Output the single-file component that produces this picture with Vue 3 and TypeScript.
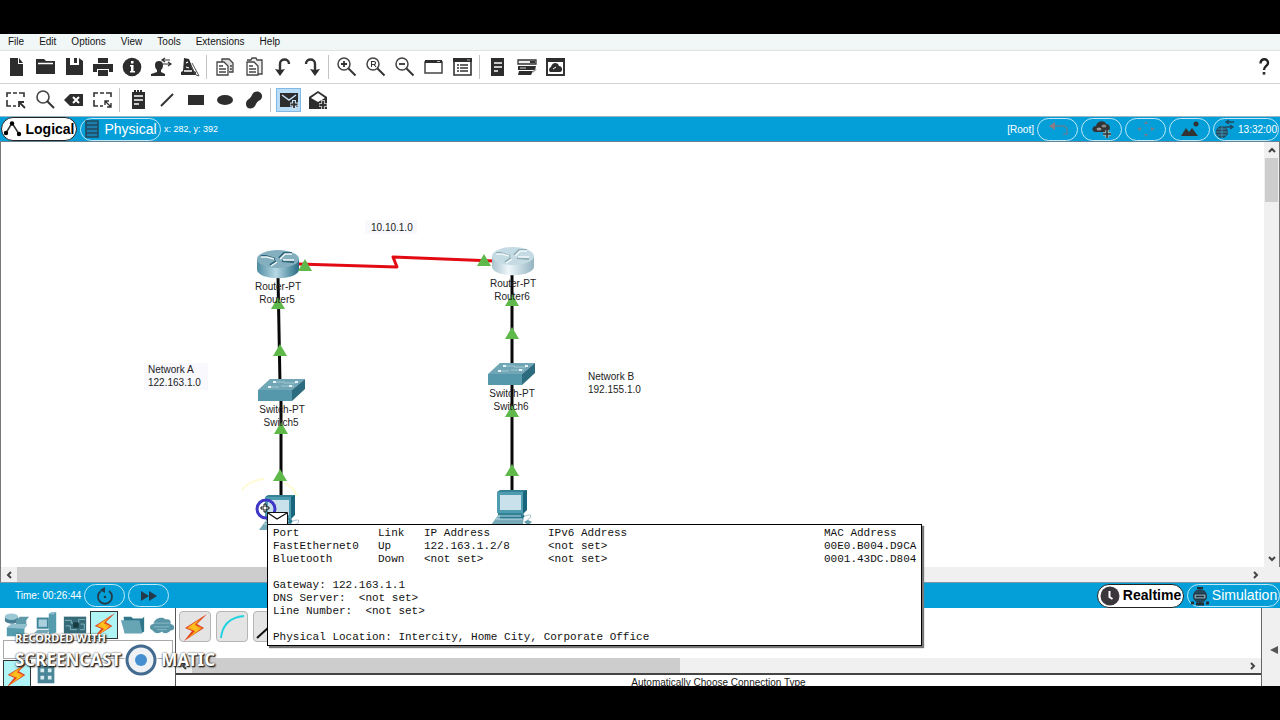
<script setup lang="ts">
interface Tool {
  name: string
  icon: string
  active?: boolean
}

interface Point {
  x: number
  y: number
}

const menus: string[] = ['File', 'Edit', 'Options', 'View', 'Tools', 'Extensions', 'Help']

const lens = '<circle cx="9" cy="9" r="6" fill="none" stroke="#444" stroke-width="1.500"/><path d="M13.500 13.500l7 7" stroke="#333" stroke-width="2"/>'
const dashes = '<path d="M3 9V5h4M9 5h4M15 5h5v4M3 12v6h4M9 18h3" fill="none" stroke="#333" stroke-width="1.600"/>'

const mainTools: Tool[][] = [
  [
    { name: 'New', icon: '<path d="M6 3h8v6h5v12H6zM15 3l4 5h-4z"/>' },
    { name: 'Open', icon: '<path d="M3 4h8l2 2h9v13H3z"/><path d="M5 8.500h15" stroke="#fff" stroke-width="1.500"/>' },
    { name: 'Save', icon: '<path d="M4 3h4v7h9V3l4 3v14H4zM12 3h3v5h-3z"/>' },
    { name: 'Print', icon: '<path d="M7 3h10v5H7zM2 9h20v8h-4v-3H6v3H2zM7 15h10v6H7z"/>' },
    { name: 'Network information', icon: '<circle cx="12" cy="12" r="9.300"/><path d="M11 6h2.500v2.500H11zM10 10h3.500v6H15v1.500h-5V16h1v-4.500h-1z" fill="#fff"/>' },
    { name: 'User profile', icon: '<path d="M6 10a4 4 0 018 0c0 3-1 4-2 5v2l4 2v2H2v-2l6-2v-2c-1-1-2-2-2-5z"/><path d="M14 5h7M14 9h7M16 3l-3 2 3 2M19 7l3 2-3 2" fill="none" stroke="#333" stroke-width="1.200"/>' },
    { name: 'Activity wizard', icon: '<path d="M6 3l5 1 5 12 2 1v3H3v-3l2-1z"/><path d="M8 8l2-1M8 12l3 1M6 16h8" stroke="#fff" stroke-width="1.300"/><path d="M14 8l6 11 1 2-3-1-5-9" fill="none" stroke="#555"/>' },
  ],
  [
    { name: 'Copy', icon: '<path d="M9 7V4h7l4 4v9h-4" fill="#ddd" stroke="#444" stroke-width="1.300"/><path d="M4 7h7l4 4v9H4z" fill="#fff" stroke="#444" stroke-width="1.300"/><path d="M6 11h4M6 14h7M6 17h7M17 11h2M17 14h2" stroke="#444" stroke-width="1.300"/>' },
    { name: 'Paste', icon: '<path d="M5 5h4l1-2h4l1 2h5v14h-5" fill="#eee" stroke="#444" stroke-width="1.300"/><path d="M5 7h7l4 4v9H5z" fill="#fff" stroke="#444" stroke-width="1.300"/><path d="M7 11h4M7 14h7M7 17h7" stroke="#444" stroke-width="1.300"/>' },
    { name: 'Undo', icon: '<path d="M18 9c0-6-9-6-9 0v8" fill="none" stroke="#333" stroke-width="2.400"/><path d="M4 14l5 1 5-1-5 7z"/>' },
    { name: 'Redo', icon: '<path d="M6 9c0-6 9-6 9 0v8" fill="none" stroke="#333" stroke-width="2.400"/><path d="M10 14l5 1 5-1-5 7z"/>' },
  ],
  [
    { name: 'Zoom in', icon: lens + '<path d="M6 9h6M9 6v6" stroke="#333" stroke-width="1.800"/>' },
    { name: 'Zoom reset', icon: lens + '<path d="M7.500 12V6.500H10a1.500 1.500 0 010 3H8M10 9.500l2 2.500" fill="none" stroke="#333" stroke-width="1.100"/>' },
    { name: 'Zoom out', icon: lens + '<path d="M6 9h6" stroke="#333" stroke-width="1.800"/>' },
    { name: 'Drawing palette', icon: '<path d="M3 7h17v11H3z" fill="#fff" stroke="#444" stroke-width="1.500"/><path d="M3 5h17v3H3z"/><path d="M15 6.500h3" stroke="#bbb"/>' },
    { name: 'Custom devices dialog', icon: '<path d="M3 5h17v15H3z" fill="#fff" stroke="#333" stroke-width="1.600"/><path d="M2 3h19v4H2z"/><path d="M6 10h2M6 13h2M6 16h2M9 10h8M9 13h8M9 16h8" stroke="#333" stroke-width="1.600"/><path d="M16 5h3" stroke="#aaa"/>' },
  ],
  [
    { name: 'Notes', icon: '<path d="M5 3h13v18H5z"/><path d="M8 8h8M8 12h8M8 16h4" stroke="#fff" stroke-width="1.500"/>' },
    { name: 'Device list', icon: '<path d="M3 5h18v4H3z" fill="#eee" stroke="#333" stroke-width="1.300"/><path d="M3 11h18l-1 4H3zM4 16h14l-2 4H3z"/><path d="M15 7h5" stroke="#333" stroke-width="2"/><path d="M5 13h6M18 17l3-3" stroke="#999" stroke-width="1.500"/>' },
    { name: 'Background', icon: '<path d="M3 5h17v15H3z" fill="#fff" stroke="#333" stroke-width="2"/><path d="M2 3h19v4H2z"/><path d="M6 17a3 3 0 011-5c1-5 7-5 8-1 4 0 4 6 1 6z"/><path d="M9 14l3-2" stroke="#fff"/>' },
  ],
]

const drawTools: Tool[][] = [
  [
    { name: 'Select', icon: dashes + '<path d="M21 20l-5-5M15 19v-5h5" fill="none" stroke="#333" stroke-width="1.800"/>' },
    { name: 'Inspect', icon: '<circle cx="10" cy="9" r="6" fill="none" stroke="#444" stroke-width="1.600"/><path d="M14 13l7 7" stroke="#333" stroke-width="2"/>' },
    { name: 'Delete', icon: '<path d="M2 12l6-6h13v12H8z"/><path d="M11 9l6 6M17 9l-6 6" stroke="#fff" stroke-width="2"/>' },
    { name: 'Resize', icon: dashes + '<path d="M14 13l6 6M14 17v-4h4M20 15v4h-4" fill="none" stroke="#333" stroke-width="1.400"/>' },
  ],
  [
    { name: 'Place note', icon: '<path d="M6 4h2V2h2v2h1V2h2v2h1V2h2v2h3v17H6z"/><path d="M8 8h9M8 12h9M8 16h5" stroke="#fff" stroke-width="1.500"/>' },
    { name: 'Draw line', icon: '<path d="M6 18L18 6" stroke="#333" stroke-width="2"/>' },
    { name: 'Draw rectangle', icon: '<path d="M4 7h16v10H4z"/>' },
    { name: 'Draw ellipse', icon: '<ellipse cx="12" cy="12" rx="8" ry="5"/>' },
    { name: 'Draw freeform', icon: '<path d="M10 7c2-6 11-4 10 2-1 4-4 3-6 7-2 6-10 6-10 0 0-5 4-4 6-9z"/>' },
  ],
  [
    { name: 'Add simple PDU', active: true, icon: '<path d="M3 5h18v14H3z"/><path d="M5 7l7 5 7-5" fill="none" stroke="#c6e0f5" stroke-width="1.500"/><path d="M17 12v9M13 16.500h8" stroke="#c6e0f5" stroke-width="4"/><path d="M17 13v7M13.500 16.500h7" stroke="#333" stroke-width="1.800"/>' },
    { name: 'Add complex PDU', icon: '<path d="M3 9l9-6 9 6v12H3z"/><path d="M5 10l7-5 7 5-7 4z" fill="#fff"/><path d="M17 12v9M13 17h8" stroke="#bbb" stroke-width="4"/><path d="M17 13v8M13.500 17h7" stroke="#333" stroke-width="1.800"/>' },
  ],
]

const bolt = '<path d="M26 1L4 15l7 3-8 10 20-13-7-4z" fill="#e2401f"/><path d="M23 3L6 15l8 3-9 9 16-12-7-3z" fill="url(#flash)"/>'

const categories: Tool[] = [
  { name: 'Network devices', icon: '<path d="M1 5v5c3 4 14 3 14 0V5z" fill="#467f92"/><ellipse cx="8" cy="5" rx="7" ry="3.500" fill="#9cc8d6"/><path d="M13 9l4-4h10l-3 4v7H13z" fill="#5f9aab"/><path d="M3 17l5-4h17l-3 5v8H3z" fill="#559caf"/><path d="M3 17l5-4h17l-3 5z" fill="#93c0cd"/>' },
  { name: 'End devices', icon: '<path d="M4 6h13v12H4z" fill="#3f8498"/><path d="M6 8h9v8H6z" fill="#a9d0dc"/><path d="M1 23l4-4h14l-4 4z" fill="#72a7b5"/><path d="M17 2l8-2v22l-8 2z" fill="#559caf"/><path d="M17 2l3-2h5l-3 3z" fill="#8bbccb"/>' },
  { name: 'Components', icon: '<path d="M2 5h24v18H2z" fill="#366b78"/><path d="M3 9h7v3h8V8h7M4 15h5v4h7M20 13h4v6h-5" fill="none" stroke="#89b9c3"/><path d="M12 11h6v6h-6z" fill="#183a43"/>' },
  { name: 'Connections', icon: bolt, active: true },
  { name: 'Miscellaneous', icon: '<path d="M4 5h8l2 2h10l2-2v16l-3 2H5z" fill="#2f768a"/><path d="M1 9h20l3 14H5z" fill="#67a5b5"/>' },
  { name: 'Multiuser connection', icon: '<path d="M4 20c-5-2-3-7 1-7 0-6 9-9 13-5 5-1 6 3 5 5 6 1 5 7 0 7-3 4-8 3-9 1-4 3-8 2-10-1z" fill="#5795a7"/><path d="M5 12h17M5 16h17M9 19h10" stroke="#8bbac7"/>' },
]

const triangles: Point[] = [
  { x: 305, y: 265 }, { x: 278, y: 303 }, { x: 280, y: 350 }, { x: 281, y: 428 }, { x: 280, y: 475 },
  { x: 484, y: 260 }, { x: 512, y: 300 }, { x: 512, y: 333 }, { x: 512, y: 411 }, { x: 512, y: 470 },
]

const routers = [
  { x: 257, y: 250, body: 'url(#routerDark)', top: '#84afbf', mark: '#2d6478' },
  { x: 492, y: 247, body: 'url(#routerLight)', top: '#c5dbe3', mark: '#92aeb9' },
]

const switches: Point[] = [{ x: 258, y: 379 }, { x: 488, y: 363 }]
const computers: Point[] = [{ x: 265, y: 495 }, { x: 497, y: 490 }]

const labels = [
  { x: 278, y: 290, type: 'Router-PT', name: 'Router5', dx: 277 },
  { x: 513, y: 287, type: 'Router-PT', name: 'Router6', dx: 512 },
  { x: 282, y: 413, type: 'Switch-PT', name: 'Switch5', dx: 281 },
  { x: 512, y: 397, type: 'Switch-PT', name: 'Switch6', dx: 511 },
]

const ports = [
  ['FastEthernet0', 'Up', '122.163.1.2/8', '<not set>', '00E0.B004.D9CA'],
  ['Bluetooth', 'Down', '<not set>', '<not set>', '0001.43DC.D804'],
]

const details: string[] = ['Gateway: 122.163.1.1', 'DNS Server:  <not set>', 'Line Number:  <not set>']
</script>

<template>
  <div class="stage">
    <main class="window">
      <nav class="menubar" aria-label="Main menu">
        <button v-for="m in menus" :key="m" type="button">{{ m }}</button>
      </nav>

      <div class="toolbar">
        <div v-for="(group, i) in mainTools" :key="i" class="group">
          <button v-for="t in group" :key="t.name" type="button" class="tool" :aria-label="t.name">
            <svg width="24" height="24" viewBox="0 0 24 24" v-html="t.icon"></svg>
          </button>
        </div>
        <button type="button" class="tool help" aria-label="Help">
          <svg width="24" height="24" viewBox="0 0 24 24"><path d="M8.500 8.500c0-6 8-5 7.500-.500 0 3-4 3-4 7" fill="none" stroke="#222" stroke-width="2.400" /><path d="M10.700 17h2.600v2.600h-2.600z" /></svg>
        </button>
      </div>

      <div class="toolbar second">
        <div v-for="(group, i) in drawTools" :key="i" class="group">
          <button v-for="t in group" :key="t.name" type="button" class="tool" :class="{ active: t.active }" :aria-label="t.name">
            <svg width="24" height="24" viewBox="0 0 24 24" v-html="t.icon"></svg>
          </button>
        </div>
      </div>

      <div class="bluebar top">
        <button type="button" class="pill chosen logical">
          <svg width="20" height="18" viewBox="0 0 20 18"><path d="M3 13L9 3l7 11" fill="none" stroke="#333" stroke-width="1.500" /><circle cx="3" cy="13" r="2.200" /><circle cx="9" cy="3.500" r="2.200" /><circle cx="16" cy="14" r="2.200" /></svg>
          Logical
        </button>
        <button type="button" class="pill mode physical">
          <svg width="16" height="18" viewBox="0 0 16 18"><path d="M2 1h12v16H2zM2 5h12M2 9h12M2 13h12" fill="#1b7fae" stroke="#22485c" stroke-width="1.500" /></svg>
          Physical
        </button>
        <span class="coords">x: 282, y: 392</span>
        <span class="root">[Root]</span>
        <button type="button" class="pill" aria-label="Back to parent">
          <svg width="24" height="20" viewBox="0 0 24 20"><path d="M6 7h11q4 0 4 4v4h-4" fill="none" stroke="#5b819a" stroke-width="1.500" /><path d="M3 7l6-4v8z" fill="#8c7c84" /></svg>
        </button>
        <button type="button" class="pill" aria-label="New cluster">
          <svg width="24" height="20" viewBox="0 0 24 20"><path d="M5 13c-4-1-3-6 1-6 1-6 9-6 10-2 5 0 5 7 1 8z" fill="#333" /><ellipse cx="9" cy="10" rx="2.500" ry="1.500" fill="#999" /><ellipse cx="14" cy="7" rx="2.500" ry="1.500" fill="#888" /><path d="M17 11v8M13 15h8" stroke="#9bb" stroke-width="3.500" /><path d="M17 11v8M13 15h8" stroke="#333" stroke-width="1.600" /></svg>
        </button>
        <button type="button" class="pill" aria-label="Move object">
          <svg width="24" height="20" viewBox="0 0 24 20" fill="#6f7f90"><path d="M12 2l2 3h-4zM12 18l2-3h-4zM3 10l4-2v4zM21 10l-4-2v4z" /></svg>
        </button>
        <button type="button" class="pill" aria-label="Set tiled background">
          <svg width="24" height="20" viewBox="0 0 24 20"><path d="M3 17l5-8 3 4 3-4 6 8z" fill="#333" /><circle cx="18" cy="5" r="2.500" fill="#333" /></svg>
        </button>
        <button type="button" class="pill clock">
          <svg width="20" height="20" viewBox="0 0 20 20" fill="none" stroke="#24485a"><circle cx="7" cy="13" r="5.500" fill="#24485a" /><path d="M1.500 13h11M7 7v12M3 10h8M3 16h8" stroke="#3e91b5" /><path d="M11 3h8M10 8h8M14 1l-3 2 3 2M15 6l3 2-3 2" stroke-width="1.300" /></svg>
          13:32:00
        </button>
      </div>

      <section class="workspace" aria-label="Logical workspace">
        <svg class="canvas" width="1263" height="425">
          <defs>
            <linearGradient id="routerDark"><stop offset="0" stop-color="#4f8ba0" /><stop offset="0.450" stop-color="#b7d9e5" /><stop offset="1" stop-color="#286c84" /></linearGradient>
            <linearGradient id="routerLight"><stop offset="0" stop-color="#a9c5cf" /><stop offset="0.400" stop-color="#eef7fa" /><stop offset="1" stop-color="#93b4c0" /></linearGradient>
            <linearGradient id="flash" x1="1" y1="0" x2="0" y2="1"><stop offset="0" stop-color="#e2401f" /><stop offset="0.500" stop-color="#ffc61e" /><stop offset="1" stop-color="#f0781c" /></linearGradient>
          </defs>
          <g transform="translate(-1 -142)">
            <path d="M365 220h52v14h-52zM144 363h64v27h-64z" fill="#f9f9fd" />
            <path d="M242 490Q250 480 264 479M284 483Q294 487 297 496" fill="none" stroke="#fffbd2" stroke-width="2" />
            <path d="M298 264L397 267 393 257 494 261" fill="none" stroke="#e30b13" stroke-width="3" stroke-linejoin="round" />
            <path d="M278 276L280 384M281 400V496M512 274V368M512 384V492" stroke="#080808" stroke-width="3" />

            <g v-for="r in routers" :key="r.x" :transform="`translate(${r.x} ${r.y})`">
              <path d="M0 9v11c2 11 40 11 42 0V9z" :fill="r.body" />
              <ellipse cx="21" cy="9" rx="21" ry="9" :fill="r.top" />
              <path d="M4 6h5l9 3M22 8l5-5h8M25 11l12 1M13 15l6-4" fill="none" :stroke="r.mark" stroke-width="2" />
              <path d="M4 7h6l7 2M23 9l5-5h7M26 10h11M14 16l6-4" fill="none" stroke="#f4fafc" stroke-width="1.500" />
            </g>

            <g v-for="s in switches" :key="s.x" :transform="`translate(${s.x} ${s.y})`">
              <path d="M0 11h34v11H0z" fill="#5597ab" />
              <path d="M0 11L12 0h35L34 11z" fill="#71a6b7" />
              <path d="M34 11L47 0v10L34 22z" fill="#2d6b7e" />
              <path d="M15 3h12M26 4h12M11 8h10M23 7h13" stroke="#a5c9d4" />
              <path d="M15 3h3M37 3h3M10 8h3M31 7h3" stroke="#e8f5f8" stroke-width="2" />
            </g>

            <g v-for="c in computers" :key="c.x" :transform="`translate(${c.x} ${c.y})`">
              <path d="M-6 35l8-11h25l-1 11z" fill="#76aab8" />
              <path d="M3 23h20l5 3-3 3H3z" fill="#28798e" />
              <path d="M0 2l3-2h27l-3 23-3 2H1z" fill="#348196" />
              <path d="M0 2h26v21H0z" fill="#4e9cb0" />
              <path d="M26 2l4-2v20l-4 4z" fill="#19657b" />
              <path d="M3 5h21v15H3z" fill="#c9e1eb" />
              <path d="M-1 29h26M0 26h24" stroke="#bbdce6" />
              <path d="M28 26q8-3 5 2l-5 4" fill="none" stroke="#a9c5ce" />
              <path d="M27 32l4-2 4 2-4 3z" fill="#609dad" />
            </g>

            <path v-for="(t, i) in triangles" :key="i" :d="`M${t.x} ${t.y - 6}l7 12h-14z`" fill="#5fb84a" />

            <g v-for="l in labels" :key="l.name" class="name">
              <text :x="l.x" :y="l.y">{{ l.type }}</text>
              <text :x="l.dx" :y="l.y + 13">{{ l.name }}</text>
            </g>
            <text x="371" y="231">10.10.1.0</text>
            <text x="148" y="373">Network A</text>
            <text x="148" y="386">122.163.1.0</text>
            <text x="588" y="380">Network B</text>
            <text x="588" y="393">192.155.1.0</text>
          </g>
        </svg>
        <div class="vscroll">
          <button type="button" aria-label="Scroll up"><svg width="8" height="6" viewBox="0 0 8 6"><path d="M1 5l3-3 3 3" /></svg></button>
          <div class="vthumb"></div>
          <button type="button" class="end" aria-label="Scroll down"><svg width="8" height="6" viewBox="0 0 8 6"><path d="M1 1l3 3 3-3" /></svg></button>
        </div>
      </section>
      <div class="hscroll main-scroll">
        <button type="button" aria-label="Scroll left"><svg width="6" height="8" viewBox="0 0 6 8"><path d="M5 1L2 4l3 3" /></svg></button>
        <div class="hthumb"></div>
        <button type="button" class="end" aria-label="Scroll right"><svg width="6" height="8" viewBox="0 0 6 8"><path d="M1 1l3 3-3 3" /></svg></button>
      </div>

      <div class="bluebar bottom">
        <span class="time">Time: 00:26:44</span>
        <button type="button" class="pill" aria-label="Power cycle devices">
          <svg width="24" height="20" viewBox="0 0 24 20"><path d="M8 5a7 7 0 108 0" fill="none" stroke="#243a48" stroke-width="1.800" /><path d="M12 1v6L7 4z" fill="#243a48" /><circle cx="12" cy="11" r="1.300" fill="#243a48" /></svg>
        </button>
        <button type="button" class="pill" aria-label="Fast forward">
          <svg width="24" height="20" viewBox="0 0 24 20"><path d="M4 5l8 5-8 5zM12 5l8 5-8 5z" fill="#243a48" /></svg>
        </button>
        <button type="button" class="pill chosen realtime">
          <svg width="20" height="20" viewBox="0 0 20 20"><circle cx="10" cy="10" r="9.500" fill="#3a363b" /><path d="M9.500 5v6l3 2" fill="none" stroke="#fff" stroke-width="2" /></svg>
          Realtime
        </button>
        <button type="button" class="pill mode simulation">
          <svg width="20" height="20" viewBox="0 0 20 20"><circle cx="10" cy="10" r="7" fill="#24485a" /><path d="M7 2h6" stroke="#222f38" stroke-width="2" /><path d="M4 8h12v5H4z" fill="#7fa3b5" stroke="#222f38" /><path d="M6 10.500h8" stroke="#222f38" stroke-width="1.500" /><path d="M1 17h3M6 18h8M16 17h3" stroke="#222f38" stroke-width="3" /></svg>
          Simulation
        </button>
      </div>

      <section class="dock">
        <div class="library">
          <div class="cats">
            <button v-for="c in categories" :key="c.name" type="button" class="cat" :class="{ on: c.active }" :aria-label="c.name">
              <svg width="26" height="26" viewBox="0 0 28 28" v-html="c.icon"></svg>
            </button>
          </div>
          <div class="caption"></div>
          <div class="cats">
            <button type="button" class="cat on" aria-label="Connections"><svg width="26" height="26" viewBox="0 0 28 28" v-html="bolt"></svg></button>
            <button type="button" class="cat" aria-label="Structured cabling"><svg width="26" height="26" viewBox="0 0 28 28"><path d="M5 4h18v20H5z" fill="#4a8597" /><path d="M8 8h4v4H8zM16 8h4v4h-4zM8 16h4v4H8zM16 16h4v4h-4z" fill="#d7ebf0" /></svg></button>
          </div>
        </div>
        <div class="picker">
          <div class="cables">
            <button type="button" class="cable" aria-label="Automatically choose connection type"><svg width="28" height="28" viewBox="0 0 28 28" v-html="bolt"></svg></button>
            <button type="button" class="cable" aria-label="Console"><svg width="28" height="28" viewBox="0 0 28 28"><path d="M3 25Q5 5 26 3" fill="none" stroke="#22d3df" stroke-width="2" /></svg></button>
            <button type="button" class="cable" aria-label="Copper straight-through"><svg width="28" height="28" viewBox="0 0 28 28"><path d="M2 25L26 3" stroke="#111" stroke-width="2" /></svg></button>
          </div>
          <div class="hscroll">
            <button type="button" aria-label="Scroll left"><svg width="6" height="8" viewBox="0 0 6 8"><path d="M5 1L2 4l3 3" /></svg></button>
            <div class="hthumb short"></div>
            <button type="button" class="end" aria-label="Scroll right"><svg width="6" height="8" viewBox="0 0 6 8"><path d="M1 1l3 3-3 3" /></svg></button>
          </div>
          <div class="choice">Automatically Choose Connection Type</div>
        </div>
        <button type="button" class="expander" aria-label="Show packet list"><svg width="8" height="10" viewBox="0 0 8 10"><path d="M8 1v8L0 5z" fill="#555" /></svg></button>
      </section>

      <div class="tooltip" role="tooltip">
        <table>
          <colgroup><col class="c1" /><col class="c2" /><col class="c3" /><col class="c4" /><col class="c5" /></colgroup>
          <thead>
            <tr><th>Port</th><th>Link</th><th>IP Address</th><th>IPv6 Address</th><th>MAC Address</th></tr>
          </thead>
          <tbody>
            <tr v-for="p in ports" :key="p[0]"><td v-for="(cell, i) in p" :key="i">{{ cell }}</td></tr>
          </tbody>
        </table>
        <div class="block"><p v-for="d in details" :key="d">{{ d }}</p></div>
        <p class="block">Physical Location: Intercity, Home City, Corporate Office</p>
      </div>

      <svg class="cursor" width="40" height="32" viewBox="0 0 40 32" aria-hidden="true">
        <circle cx="14" cy="14" r="9" fill="none" stroke="#3d36c6" stroke-width="3" />
        <path d="M12 9h2v3h3v2h-3v3h-2v-3H9v-2h3z" fill="#fff" stroke="#111" />
        <path d="M15.500 17.500h20v12h-20z" fill="#fff" stroke="#111" />
        <path d="M16 18l9 6 10-6" fill="none" stroke="#111" stroke-width="1.300" />
      </svg>

      <div class="watermark">
        <span class="small">RECORDED WITH</span>
        <div class="brand">
          <span>SCREENCAST</span>
          <svg width="36" height="36" viewBox="0 0 36 36"><circle cx="18" cy="18" r="14.500" fill="#fff" stroke="#fff" stroke-width="5" opacity="0.750" /><circle cx="18" cy="18" r="14" fill="#eef2f5" stroke="#426b8f" stroke-width="3" /><circle cx="18" cy="18" r="6" fill="#458fd0" /></svg>
          <span>MATIC</span>
        </div>
      </div>
    </main>
  </div>
</template>

<style>
body {
  margin: 0;
  background: #000;
}
</style>

<style scoped>
* {
  box-sizing: border-box;
}
button {
  margin: 0;
  padding: 0;
  border: 0;
  background: none;
  font: inherit;
  color: inherit;
}
svg {
  display: block;
  flex: none;
}
.stage {
  height: 100vh;
  padding: 34px 0;
  background: #000;
}
.window {
  position: relative;
  display: flex;
  flex-direction: column;
  height: 100%;
  overflow: hidden;
  background: #fff;
  color: #151515;
  font: 10px/13px "Liberation Sans", Arial, sans-serif;
}
.menubar {
  display: flex;
  flex: none;
  gap: 15px;
  height: 17px;
  padding: 0 8px 2px;
  background: #f1f7f7;
  border-bottom: 1px solid #e0e4e4;
}
.toolbar {
  display: flex;
  flex: none;
  align-items: center;
  height: 33px;
  padding: 0 2px 0 1px;
  border-bottom: 1px solid #d2d2d2;
}
.toolbar.second {
  height: 32px;
  border-bottom: 0;
}
.group {
  display: flex;
}
.group + .group {
  margin-left: 2px;
  padding-left: 3px;
  border-left: 1px solid #c4c4c4;
}
.tool {
  display: flex;
  align-items: center;
  justify-content: center;
  width: 29px;
  height: 24px;
  fill: #2d2d2d;
}
.tool.active {
  background: #b9dcf7;
  border: 1px solid #82b8e4;
  width: 25px;
  margin: 0 2px;
}
.help {
  margin-left: auto;
}
.bluebar {
  display: flex;
  flex: none;
  align-items: center;
  gap: 3px;
  background: #049fd9;
  color: #fff;
  white-space: nowrap;
}
.top {
  height: 26px;
  padding: 0 1px;
  border-top: 1px solid #98b6c3;
  border-bottom: 1px solid #648493;
}
.bottom {
  height: 26px;
  border-top: 1px solid #7799a8;
}
.pill {
  display: flex;
  flex: none;
  align-items: center;
  justify-content: center;
  width: 41px;
  height: 23px;
  border: 1px solid #bfe9f8;
  border-radius: 12px;
}
.chosen {
  background: #fff;
  border-color: #222;
  color: #000;
  font-size: 14px;
  font-weight: bold;
}
.mode {
  font-size: 14px;
}
.logical {
  gap: 2px;
  width: 76px;
  height: 24px;
}
.physical {
  gap: 4px;
  width: 81px;
}
.coords {
  font-size: 9px;
}
.root {
  margin-left: auto;
}
.clock {
  gap: 3px;
  width: 66px;
}
.time {
  padding-left: 15px;
}
.realtime {
  gap: 3px;
  width: 87px;
  height: 24px;
  margin-left: auto;
}
.simulation {
  gap: 2px;
  width: 93px;
}
.workspace {
  display: flex;
  flex: 1;
  min-height: 0;
  border-left: 1px solid #777;
  border-right: 1px solid #777;
}
.canvas {
  flex: 1;
  min-width: 0;
  fill: #222;
}
.name {
  text-anchor: middle;
}
.vscroll {
  display: flex;
  flex-direction: column;
  align-items: center;
  width: 15px;
  background: #f0f0f0;
}
.vscroll button {
  display: grid;
  place-items: center;
  width: 15px;
  height: 16px;
}
.vscroll path,
.hscroll path {
  fill: none;
  stroke: #444;
  stroke-width: 2;
}
.vthumb {
  width: 13px;
  height: 44px;
  background: #cdcdcd;
}
.vscroll .end {
  margin-top: auto;
}
.hscroll {
  display: flex;
  flex: none;
  height: 15px;
  background: #f0f0f0;
}
.hscroll button {
  display: grid;
  place-items: center;
  width: 16px;
}
.hthumb {
  width: 60%;
  background: #cdcdcd;
}
.hthumb.short {
  width: 45%;
}
.hscroll .end {
  margin-left: auto;
}
.main-scroll {
  padding-right: 16px;
  border-left: 1px solid #777;
}
.dock {
  display: flex;
  flex: none;
  height: 78px;
  overflow: hidden;
}
.library {
  width: 176px;
  padding: 3px 2px 0 3px;
  border-right: 1px solid #555;
}
.cats {
  display: flex;
  gap: 1px;
}
.cat {
  display: grid;
  flex: none;
  place-items: center;
  width: 28px;
  height: 28px;
}
.cat.on {
  background: #aff5f5;
  border: 1px solid #333;
}
.caption {
  height: 19px;
  margin: 1px 0;
  border: 1px solid #aaa;
}
.picker {
  flex: 1;
  min-width: 0;
}
.cables {
  display: flex;
  gap: 5px;
  height: 50px;
  padding: 3px;
}
.cable {
  display: grid;
  place-items: center;
  width: 32px;
  height: 31px;
  border: 1px solid #b5b5b5;
  border-radius: 4px;
  background: #e4e4e4;
}
.choice {
  height: 13px;
  padding-top: 2px;
  border-top: 2px solid #444;
  line-height: 12px;
  text-align: center;
}
.expander {
  display: grid;
  place-items: center;
  width: 19px;
  padding: 6px 0 0 6px;
  border-left: 1px solid #666;
  background: #f0f0f0;
}
.tooltip {
  position: absolute;
  left: 267px;
  top: 490px;
  width: 655px;
  padding: 2px 5px 1px;
  border: 1px solid #000;
  background: #fff;
  box-shadow: 2px 2px 1px #777;
  color: #111;
  font: 11px/13px "Liberation Mono", "Courier New", monospace;
  white-space: pre;
}
table {
  width: 100%;
  border-collapse: collapse;
  table-layout: fixed;
}
th,
td {
  padding: 0;
  font-weight: normal;
  text-align: left;
}
.c1 {
  width: 105px;
}
.c2 {
  width: 46px;
}
.c3 {
  width: 124px;
}
.c4 {
  width: 276px;
}
p {
  margin: 0;
}
.block {
  margin-top: 13px;
}
.cursor {
  position: absolute;
  left: 252px;
  top: 461px;
}
.watermark {
  position: absolute;
  left: 15px;
  bottom: 8px;
  color: #fff;
  font-family: "Noto Sans", sans-serif;
  font-weight: bold;
  text-shadow: 1px 1px 1px #222, 0 0 2px #444, 1px 1px 2px #333;
}
.small {
  display: block;
  height: 8px;
  font-size: 11px;
  line-height: 8px;
}
.brand {
  display: flex;
  align-items: center;
  gap: 2px;
  font-size: 17px;
  line-height: 20px;
}
</style>
